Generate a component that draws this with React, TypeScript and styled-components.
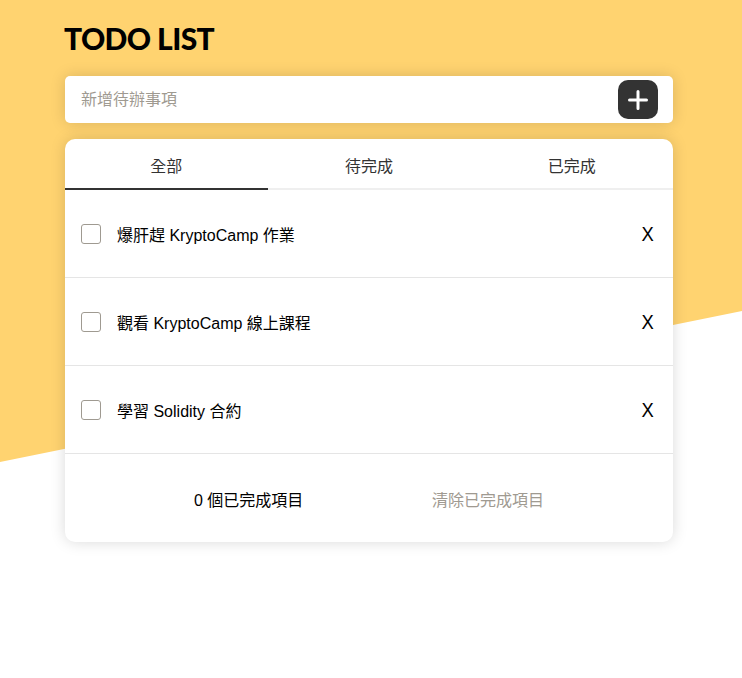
import React, { useState } from "react";
import styled, { createGlobalStyle } from "styled-components";

const Global = createGlobalStyle`
  html, body { margin: 0; padding: 0; background: #fff; }
  body { font-family: "Liberation Sans", "Noto Sans CJK TC", sans-serif; color: #333; }
  * { box-sizing: border-box; }
`;

const Page = styled.div`
  position: relative;
  width: 742px;
  height: 678px;
  overflow: hidden;
`;

const Backdrop = styled.div`
  position: absolute;
  inset: 0;
  background: #ffd370;
  clip-path: polygon(0 0, 100% 0, 100% 311px, 0 462px);
  z-index: 0;
`;

const Container = styled.main`
  position: relative;
  z-index: 1;
  width: 608px;
  margin-left: 65px;
  padding-top: 18px;
  display: flex;
  flex-direction: column;
`;

const Title = styled.h1`
  margin: 0 0 17px -1px;
  font-family: "Lato", "Liberation Sans", sans-serif;
  font-weight: 900;
  font-size: 30px;
  line-height: 41px;
  color: #000;
  letter-spacing: -0.6px;
`;

const InputBar = styled.div`
  height: 47px;
  background: #fff;
  border-radius: 5px;
  box-shadow: 0 0 15px rgba(0, 0, 0, 0.15);
  display: flex;
  align-items: center;
  padding: 0 15px 0 16px;
  margin-bottom: 16px;
`;

const Input = styled.input`
  flex: 1;
  border: none;
  outline: none;
  background: transparent;
  font-family: "Liberation Sans", "Noto Sans CJK TC", sans-serif;
  font-size: 16px;
  color: #333;
  padding: 0;
  &::placeholder { color: #9f9a91; }
`;

const AddButton = styled.button`
  width: 40px;
  height: 39px;
  border: none;
  border-radius: 10px;
  background: #333;
  display: flex;
  align-items: center;
  justify-content: center;
  padding: 0;
  cursor: pointer;
`;

const Card = styled.section`
  background: #fff;
  border-radius: 10px;
  box-shadow: 0 0 15px rgba(0, 0, 0, 0.15);
  overflow: hidden;
`;

const Tabs = styled.nav`
  display: grid;
  grid-template-columns: repeat(3, 1fr);
`;

const Tab = styled.button<{ $active?: boolean }>`
  height: 51px;
  border: none;
  background: transparent;
  border-bottom: 2px solid ${(p) => (p.$active ? "#333" : "#efefef")};
  font-family: "Liberation Sans", "Noto Sans CJK TC", sans-serif;
  font-size: 16px;
  color: #333;
  padding: 0;
  padding-top: 2px;
  cursor: pointer;
`;

const List = styled.ul`
  list-style: none;
  margin: 0;
  padding: 0;
`;

const Row = styled.li`
  height: 88px;
  border-bottom: 1px solid #e5e5e5;
  display: flex;
  align-items: center;
  padding: 0 19px 0 16px;
`;

const Check = styled.span`
  width: 20px;
  height: 20px;
  border: 1px solid #9f9a91;
  border-radius: 3px;
  flex-shrink: 0;
  margin-right: 16px;
`;

const ItemText = styled.span`
  flex: 1;
  font-size: 16px;
  color: #000;
`;

const Remove = styled.button`
  border: none;
  background: transparent;
  padding: 0;
  margin-top: 1px;
  font-family: "Liberation Sans", sans-serif;
  font-size: 20px;
  line-height: 1;
  color: #000;
  transform: scaleX(0.92);
  cursor: pointer;
`;

const Footer = styled.footer`
  height: 88px;
  display: flex;
  align-items: center;
  justify-content: space-evenly;
  font-size: 16px;
  padding-top: 1px;
`;

const Count = styled.span`
  color: #000;
`;

const Clear = styled.button`
  border: none;
  background: transparent;
  padding: 0;
  font-family: "Liberation Sans", "Noto Sans CJK TC", sans-serif;
  font-size: 16px;
  color: #9f9a91;
  cursor: pointer;
`;

const tabs = ["全部", "待完成", "已完成"];
const todos = ["爆肝趕 KryptoCamp 作業", "觀看 KryptoCamp 線上課程", "學習 Solidity 合約"];

export default function App() {
  const [active, setActive] = useState(0);
  return (
    <>
      <Global />
      <Page>
        <Backdrop />
        <Container>
          <Title>TODO LIST</Title>
          <InputBar>
            <Input placeholder="新增待辦事項" />
            <AddButton aria-label="add">
              <svg width="20" height="20" viewBox="0 0 20 20">
                <path d="M10 1.5v17M1.5 10h17" stroke="#fff" strokeWidth="3" strokeLinecap="round" />
              </svg>
            </AddButton>
          </InputBar>
          <Card>
            <Tabs>
              {tabs.map((t, i) => (
                <Tab key={t} $active={i === active} onClick={() => setActive(i)}>
                  {t}
                </Tab>
              ))}
            </Tabs>
            <List>
              {todos.map((t) => (
                <Row key={t}>
                  <Check />
                  <ItemText>{t}</ItemText>
                  <Remove>X</Remove>
                </Row>
              ))}
            </List>
            <Footer>
              <Count>0 個已完成項目</Count>
              <Clear>清除已完成項目</Clear>
            </Footer>
          </Card>
        </Container>
      </Page>
    </>
  );
}
